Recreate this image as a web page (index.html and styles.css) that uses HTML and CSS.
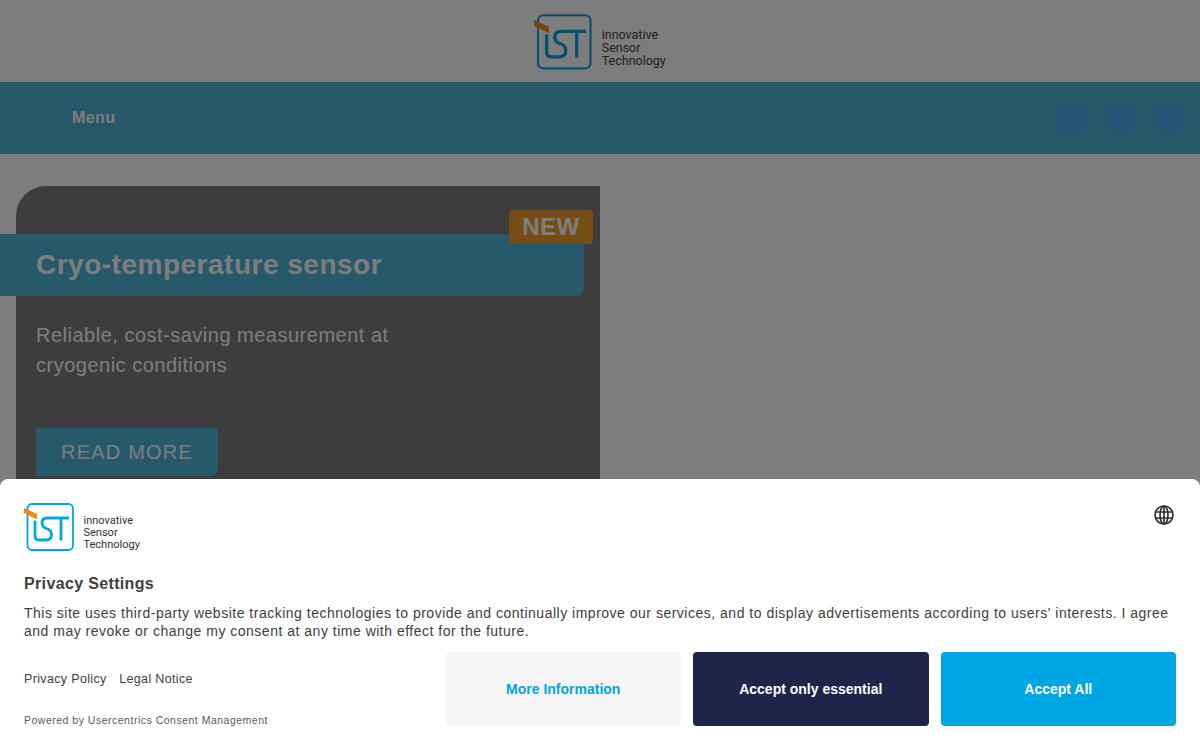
FILE: index.html
```html
<!DOCTYPE html>
<html lang="en">
<head>
<meta charset="utf-8">
<title>innovative Sensor Technology</title>
<link rel="stylesheet" href="styles.css">
</head>
<body>
<svg class="defs" width="0" height="0" aria-hidden="true">
  <symbol id="ist" viewBox="0 0 52 50">
    <rect x="3.500" y="1" width="45.500" height="46" rx="4.500" fill="none" stroke="#00a5e3" stroke-width="1.800"/>
    <path d="M0 5 L13 11 L13 16.500 L0 10 Z" fill="#f08a12"/>
    <path d="M11 17.500 V33 Q11 37 15 37 H19" fill="none" stroke="#00a5e3" stroke-width="2.800"/>
    <path d="M29 15 H23 Q18 15 18 20 Q18 24 22.500 25.500 Q27.500 27 27.500 31.500 Q27.500 37 22 37 H18" fill="none" stroke="#00a5e3" stroke-width="2.800"/>
    <path d="M29 15 H45 M37 15 V37.500" fill="none" stroke="#00a5e3" stroke-width="2.800"/>
  </symbol>
</svg>
<header class="site-header">
  <a class="brand brand-large" href="#">
    <svg class="brand-mark" aria-hidden="true"><use href="#ist"/></svg>
    <span class="brand-text">innovative<br>Sensor<br>Technology</span>
  </a>
</header>
<nav class="nav-bar">
  <span class="nav-menu">Menu</span>
  <div class="nav-icons">
    <span class="nav-dot"></span>
    <span class="nav-dot"></span>
    <span class="nav-dot"></span>
  </div>
</nav>
<main class="content">
  <article class="hero-card">
    <div class="hero-title-bar">
      <h1 class="hero-title">Cryo-temperature sensor</h1>
      <span class="hero-badge">NEW</span>
    </div>
    <p class="hero-text">Reliable, cost-saving measurement at cryogenic conditions</p>
    <a class="hero-button" href="#">READ MORE</a>
  </article>
</main>
<div class="overlay"></div>
<section class="consent">
  <div class="consent-top">
    <a class="brand brand-small" href="#">
      <svg class="brand-mark" aria-hidden="true"><use href="#ist"/></svg>
      <span class="brand-text">innovative<br>Sensor<br>Technology</span>
    </a>
    <svg class="globe" viewBox="0 0 20 20" aria-hidden="true">
      <circle cx="10" cy="10" r="9" />
      <ellipse cx="10" cy="10" rx="4" ry="9" />
      <path d="M10 1 V19 M1.800 7 H18.200 M1.800 13 H18.200" />
    </svg>
  </div>
  <h2 class="consent-title">Privacy Settings</h2>
  <p class="consent-text">This site uses third-party website tracking technologies to provide and continually improve our services, and to display advertisements according to users' interests. I agree and may revoke or change my consent at any time with effect for the future.</p>
  <div class="consent-bottom">
    <div class="consent-links">
      <div class="link-row"><a href="#">Privacy Policy</a><a href="#">Legal Notice</a></div>
      <div class="powered">Powered by Usercentrics Consent Management</div>
    </div>
    <div class="consent-buttons">
      <button class="btn btn-more">More Information</button>
      <button class="btn btn-essential">Accept only essential</button>
      <button class="btn btn-all">Accept All</button>
    </div>
  </div>
</section>
</body>
</html>
```
FILE: styles.css
```css
* { box-sizing: border-box; }
html, body { margin: 0; height: 100%; }
body {
  font-family: "Liberation Sans", Arial, sans-serif;
  background: #fff;
  overflow: hidden;
  height: 750px;
}
a { text-decoration: none; color: inherit; }
.defs { position: absolute; }

.brand { display: flex; align-items: center; }
.brand-text {
  font-family: "Roboto", "Noto Sans", sans-serif;
  color: #444;
}
.site-header {
  height: 82px;
  display: flex;
  justify-content: center;
  align-items: center;
}
.brand-large { padding-top: 3px; }
.brand-large .brand-mark { width: 60px; height: 58px; }
.brand-large .brand-text { margin: 9px 0 0 7.500px; font-size: 12.500px; line-height: 13px; }
.brand-small .brand-mark { width: 52px; height: 50px; }
.brand-small .brand-text { margin: 10px 0 0 7.500px; font-size: 11px; line-height: 12px; color: #333; }

.nav-bar {
  height: 72px;
  background: #4cb3d6;
  display: flex;
  align-items: center;
  justify-content: space-between;
  padding: 0 17px 0 72px;
}
.nav-menu { color: #fff; font-weight: 700; font-size: 16px; letter-spacing: 0.400px; }
.nav-icons { display: flex; gap: 19.500px; }
.nav-dot { width: 29px; height: 29px; border-radius: 50%; background: #4aa9ec; filter: blur(1px); }

.content { padding: 32px 16px; }
.hero-card {
  width: 584px;
  height: 330px;
  background: #7d7d7d;
  border-top-left-radius: 30px;
  padding-top: 48px;
}
.hero-title-bar {
  position: relative;
  margin-left: -16px;
  width: 584px;
  height: 62px;
  background: #4eb7db;
  border-radius: 0 0 8px 0;
  display: flex;
  align-items: center;
  padding-left: 36px;
}
.hero-title {
  margin: 0;
  color: #fff;
  font-size: 28px;
  font-weight: 700;
  letter-spacing: 0.500px;
}
.hero-badge {
  position: absolute;
  right: -9px;
  top: -24px;
  width: 84px;
  height: 34px;
  border-radius: 4px;
  background: #f09c2f;
  color: #fff;
  font-weight: 700;
  font-size: 24px;
  letter-spacing: 0.500px;
  display: flex;
  align-items: center;
  justify-content: center;
}
.hero-text {
  margin: 24px 0 0 20px;
  width: 400px;
  color: #fff;
  font-size: 20px;
  line-height: 30px;
  letter-spacing: 0.500px;
}
.hero-button {
  display: flex;
  align-items: center;
  justify-content: center;
  margin: 48px 0 0 20px;
  width: 182px;
  height: 48px;
  background: #4eb7db;
  border-radius: 0 0 8px 0;
  color: #fff;
  font-size: 20px;
  letter-spacing: 1.200px;
}

.overlay {
  position: fixed;
  inset: 0;
  background: rgba(0, 0, 0, 0.51);
}
.consent {
  position: fixed;
  left: 0;
  right: 0;
  bottom: 0;
  height: 271px;
  background: #fff;
  border-radius: 8px 8px 0 0;
  padding: 24px 24px 0;
  color: #404040;
}
.consent-top {
  display: flex;
  justify-content: space-between;
  align-items: flex-start;
}
.globe {
  width: 20px;
  height: 20px;
  margin: 2px 2px 0 0;
  fill: none;
  stroke: #333;
  stroke-width: 1.700;
}
.consent-title {
  margin: 21px 0 0;
  font-size: 16px;
  line-height: 20px;
  font-weight: 700;
  letter-spacing: 0.350px;
}
.consent-text {
  margin: 10px 0 0;
  font-size: 14px;
  line-height: 18px;
  letter-spacing: 0.503px;
}
.consent-bottom {
  margin-top: 12px;
  display: flex;
  justify-content: space-between;
}
.consent-links { padding-top: 19px; }
.link-row {
  display: flex;
  gap: 12.500px;
  font-size: 12.500px;
  line-height: 16px;
  letter-spacing: 0.350px;
}
.powered {
  margin-top: 26px;
  font-size: 10.500px;
  line-height: 14px;
  letter-spacing: 0.500px;
  color: #595959;
}
.consent-buttons { display: flex; gap: 12px; }
.btn {
  width: 235.500px;
  height: 74px;
  border: 0;
  border-radius: 4px;
  font-family: inherit;
  font-size: 14px;
  font-weight: 700;
}
.btn-more { background: #f5f5f5; color: #00a5e3; }
.btn-essential { background: #1e2549; color: #fff; }
.btn-all { background: #00a5e3; color: #fff; }
```
